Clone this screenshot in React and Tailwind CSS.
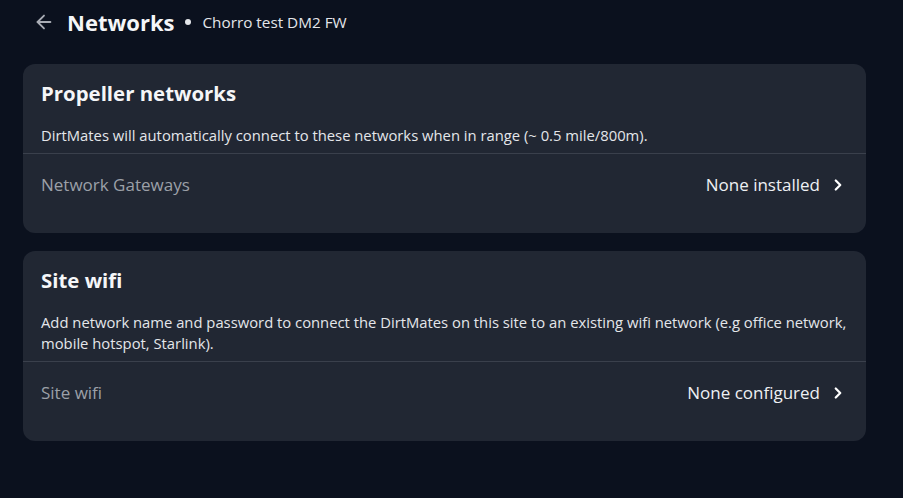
import React from 'react';
import { ArrowLeft, ChevronRight } from 'lucide-react';

const sections = [
  {
    title: 'Propeller networks',
    description: 'DirtMates will automatically connect to these networks when in range (~ 0.5 mile/800m).',
    label: 'Network Gateways',
    value: 'None installed',
  },
  {
    title: 'Site wifi',
    description:
      'Add network name and password to connect the DirtMates on this site to an existing wifi network (e.g office network, mobile hotspot, Starlink).',
    label: 'Site wifi',
    value: 'None configured',
  },
];

function SectionCard({ section }) {
  return (
    <div className="bg-[#212733] rounded-xl">
      <div className="px-[18px] pt-[14px]">
        <h2 className="text-[20.4px] leading-[30px] font-bold text-[#f5f6f8]">{section.title}</h2>
        <p className="mt-[17px] text-[14.8px] leading-[21px] text-[#e4e6ea]">{section.description}</p>
      </div>
      <div className="mt-[7px] border-t border-[#3a404c]" />
      <button className="w-full flex items-center justify-between pl-[18px] pr-[19px] pt-[19px] pb-[36px] text-left">
        <span className="text-[17px] leading-[24px] text-[#9ca0a8]">{section.label}</span>
        <span className="flex items-center gap-[9px] text-[17px] leading-[24px] text-[#eef0f3]">
          {section.value}
          <ChevronRight className="w-[18px] h-[18px] text-white" strokeWidth={3} />
        </span>
      </button>
    </div>
  );
}

export default function App() {
  return (
    <div
      className="min-h-screen w-full bg-[#0b111e] px-[23px] pt-[7px] pb-10"
      style={{ fontFamily: '"Open Sans", Lato, sans-serif' }}
    >
      {/* Header */}
      <div className="flex items-center h-[30px] pl-[10px] mb-[27px]">
        <ArrowLeft className="w-[22px] h-[22px] text-[#a9adb5]" strokeWidth={2} />
        <h1 className="ml-[12px] text-[22px] font-bold text-[#f5f6f8] leading-[30px]">Networks</h1>
        <span className="mx-[11px] w-[6px] h-[6px] rounded-full bg-[#e4e6ea]" />
        <span className="text-[15.3px] text-[#e4e6ea]">Chorro test DM2 FW</span>
      </div>

      <div className="flex flex-col gap-[18px] w-[843px]">
        {sections.map((s) => (
          <SectionCard key={s.title} section={s} />
        ))}
      </div>
    </div>
  );
}
